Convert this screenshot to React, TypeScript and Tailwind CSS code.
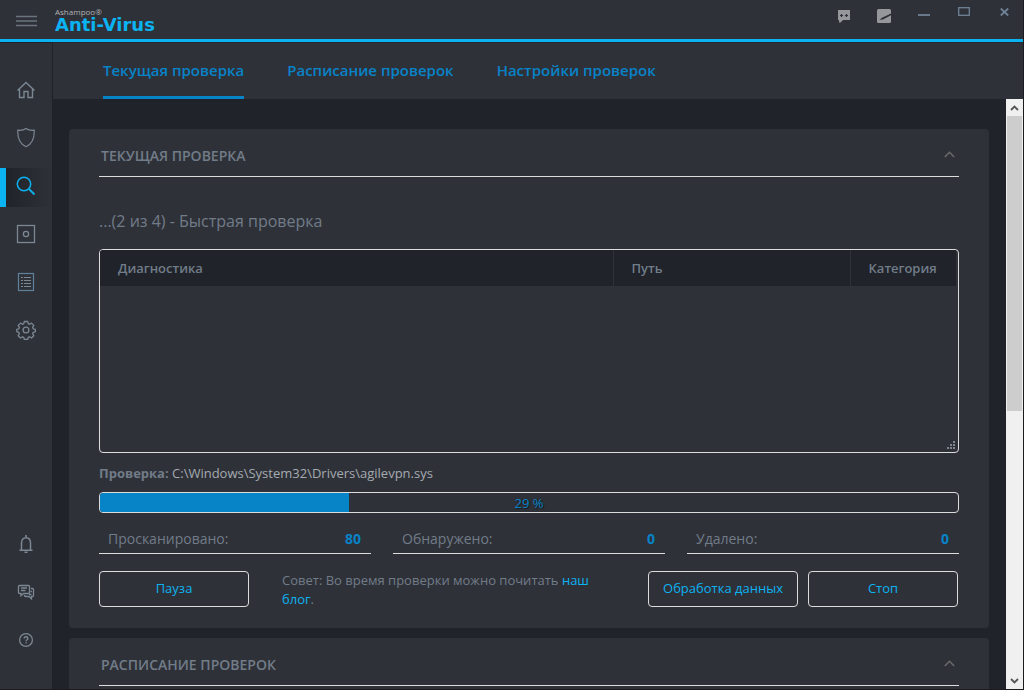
// src/App.tsx
import type { ReactNode } from "react";

interface NavItem {
  label:   string;
  icon:    ReactNode;
  active?: boolean;
}

const MAIN_NAV: NavItem[] = [
  {
    label: "Главная",
    icon: <path d="M1.500 10.500 10 2.500l8.500 8M3.500 9v8.500h4.500v-6h4v6h4.500V9" strokeWidth="1.400" />,
  },
  {
    label: "Защита",
    icon: <path d="M10 .5C8 2 5 2.500 1.800 2.200 1.500 9 3 15.500 10 18.700c7-3.200 8.500-9.700 8.200-16.500C15 2.500 12 2 10 .5z" />,
  },
  {
    label: "Проверка",
    active: true,
    icon: (
      <>
        <circle cx="8" cy="8" r="6.700" strokeWidth="1.500" />
        <path d="m13 13 5.500 5.500" strokeWidth="1.800" />
      </>
    ),
  },
  {
    label: "Карантин",
    icon: (
      <>
        <rect x="1.500" y="1.500" width="17" height="17" strokeWidth="1.300" />
        <circle cx="10" cy="10" r="2.600" strokeWidth="1.300" />
      </>
    ),
  },
  {
    label: "Отчёты",
    icon: (
      <>
        <rect x="2.500" y="1.500" width="15" height="17" stroke="#5f809c" />
        <path d="M5 5.500h2M8 5.500h7M5 8.500h2M8 8.500h7M5 11.500h2M8 11.500h7M5 14.500h2M8 14.500h7" />
      </>
    ),
  },
  {
    label: "Настройки",
    icon: (
      <>
        <path d="M8.300 1.500h3.400l.5 2.200 1.300.6 2-1.200 2.300 2.300-1.200 2 .6 1.400 2.200.5v2.400l-2.200.6-.6 1.400 1.200 2-2.300 2.300-2-1.200-1.300.6-.5 2.100H8.300l-.5-2.100-1.300-.6-2 1.200-2.300-2.300 1.200-2-.6-1.400-2-.6V9.300l2-.5.6-1.400-1.200-2 2.300-2.300 2 1.200 1.300-.6z" strokeWidth="1.300" strokeLinejoin="round" />
        <circle cx="10" cy="10" r="2.900" strokeWidth="1.300" />
      </>
    ),
  },
];

const FOOTER_NAV: NavItem[] = [
  {
    label: "Уведомления",
    icon: (
      <>
        <path d="M3.500 16.300h13M5.500 16V9c0-3.300 1.600-5.300 4.500-5.300s4.500 2 4.500 5.300v7" strokeWidth="1.500" />
        <path d="M10 1v2.500M8.500 18.300h3" strokeWidth="1.600" />
      </>
    ),
  },
  {
    label: "Сообщения",
    icon: (
      <>
        <path d="M3.500 3.500h9c.6 0 1 .4 1 1v6c0 .6-.4 1-1 1H7.500L5 13.700v-2.200H3.500c-.6 0-1-.4-1-1v-6c0-.6.4-1 1-1zM5 6h6M5 8.500h4.500" strokeWidth="1.300" />
        <path d="M15 6.500h1.500c.6 0 1 .4 1 1v6c0 .6-.4 1-1 1h-1v2.200l-2.500-2.200H9.500c-.6 0-1-.4-1-1V13M13 12.500h2.500M14.500 9.500h1.500" strokeWidth="1.300" />
      </>
    ),
  },
  {
    label: "Справка",
    icon: (
      <>
        <circle cx="10" cy="10" r="6.400" strokeWidth="1.300" />
        <path d="M8.200 8.600c0-1.200.8-1.800 1.900-1.800s1.800.6 1.800 1.600c0 1.300-1.800 1.300-1.800 2.800M10.100 12.300v1.300" strokeWidth="1.400" />
      </>
    ),
  },
];

const TABS = ["Текущая проверка", "Расписание проверок", "Настройки проверок"];

const STATS = [
  { label: "Просканировано:", value: 80 },
  { label: "Обнаружено:",     value: 0  },
  { label: "Удалено:",        value: 0  },
];

const PROGRESS = 29;

export default function App() {
  return (
    <div className="flex h-screen flex-col overflow-hidden border-r border-b border-[#1b1b20] bg-[#20232a] font-['Open_Sans','Noto_Sans',sans-serif] text-[#717c89]">
      <TitleBar />
      <div className="flex min-h-0 flex-1">
        <Sidebar />
        <div className="flex min-w-0 flex-1 flex-col">
          <Tabs />
          <div className="flex min-h-0 flex-1">
            <main className="min-w-0 flex-1 space-y-2.5 overflow-hidden py-[30px] pr-[17px] pl-4">
              <Card title="Текущая проверка">
                <ScanPanel />
              </Card>
              <Card title="Расписание проверок">
                <div className="h-40" />
              </Card>
            </main>
            <ScrollBar />
          </div>
        </div>
      </div>
    </div>
  );
}

function TitleBar() {
  return (
    <header className="flex h-[42px] shrink-0 items-start border-b-3 border-[#0bb3f2] bg-[#2f3138]">
      <button aria-label="Меню" className="mt-[15px] ml-4 text-[#6b747e]">
        <svg width="21" height="12" viewBox="0 0 21 12" stroke="currentColor" strokeWidth="1.300">
          <path d="M0 1.500h21M0 6h21M0 10.500h21" />
        </svg>
      </button>
      <div className="mt-[7px] ml-[18px]">
        <p className="text-[8px] leading-[10px] text-[#b0b2b6]">Ashampoo®</p>
        <h1 className="font-['DejaVu_Sans',sans-serif] text-[18px] leading-[15px] font-bold text-[#0bb3f2]">Anti-Virus</h1>
      </div>
      <div className="mr-3 ml-auto flex items-start text-[#6f8296]">
        <button aria-label="Отзыв" className="mr-[26px] pt-[10px] text-[#95979b]">
          <svg width="13" height="13" viewBox="0 0 13 13" fill="currentColor">
            <path d="M0 0h12v10H5l-2.500 2.500H1V10H0z" />
            <path d="M3.500 4v3M2 5.500h3M8.500 4v3M7 5.500h3" stroke="#2f3138" strokeWidth="1.200" />
          </svg>
        </button>
        <button aria-label="Оформление" className="mr-[27px] pt-[9px] text-[#95979b]">
          <svg width="14" height="14" viewBox="0 0 14 14">
            <rect width="14" height="14" rx="1.500" fill="currentColor" />
            <path d="m2.500 10.800 2.500-2 9-4.300v1.800L6 10.500z" fill="#2f3138" />
          </svg>
        </button>
        <button aria-label="Свернуть" className="mr-7 pt-[14px]">
          <svg width="12" height="2" viewBox="0 0 12 2"><path d="M0 1h12" stroke="currentColor" strokeWidth="1.800" /></svg>
        </button>
        <button aria-label="Развернуть" className="mr-[30px] pt-[7px]">
          <svg width="12" height="9" viewBox="0 0 12 9">
            <rect x=".7" y=".7" width="10.600" height="7.600" fill="none" stroke="currentColor" strokeWidth="1.300" />
          </svg>
        </button>
        <button aria-label="Закрыть" className="mr-0.5 pt-2">
          <svg width="9" height="8" viewBox="0 0 9 8"><path d="m.8.500 7.400 7M8.200.5l-7.400 7" stroke="currentColor" strokeWidth="1.800" /></svg>
        </button>
      </div>
    </header>
  );
}

function Sidebar() {
  return (
    <nav className="flex w-[53px] shrink-0 flex-col justify-between border-t border-r border-[#1f2227] bg-[#2f3138] pt-[29px] pb-7">
      <NavList items={MAIN_NAV} />
      <NavList items={FOOTER_NAV} />
    </nav>
  );
}

function NavList({ items }: { items: NavItem[] }) {
  return (
    <ul className="space-y-[9px]">
      {items.map(item => (
        <li key={item.label}>
          <button
            aria-label={item.label}
            className={`flex h-[39px] w-full items-start border-l-6 pt-2 pl-[10px]
              ${item.active ? "border-[#0bb3f2] bg-linear-to-r from-[#20232a] to-[#2f3138] text-[#0bb3f2]" : "border-transparent text-[#7b8793]"}`}
          >
            <svg width="20" height="20" viewBox="0 0 20 20" fill="none" stroke="currentColor" strokeWidth="1.200">
              {item.icon}
            </svg>
          </button>
        </li>
      ))}
    </ul>
  );
}

function Tabs() {
  return (
    <div className="flex h-[57px] shrink-0 items-stretch gap-[43px] border-t border-[#25282e] bg-[#2f3138] pl-[50px]" role="tablist">
      {TABS.map((tab, i) => (
        <button
          key={tab}
          role="tab"
          aria-selected={i === 0}
          className={`border-b-3 pt-0.5 text-[15px] font-semibold text-[#0783c8] ${i === 0 ? "border-[#0783c8]" : "border-transparent"}`}
        >
          {tab}
        </button>
      ))}
    </div>
  );
}

function Card({ title, children }: { title: string; children: ReactNode }) {
  return (
    <section className="rounded bg-[#2f3138] px-[30px]">
      <div className="flex h-12 items-center justify-between border-b border-[#dcdcdc] pt-1.5 pr-1 pl-0.5">
        <h2 className="text-[14px] font-semibold uppercase">{title}</h2>
        <button aria-label="Свернуть раздел" className="pb-0.5 text-[#696969]">
          <svg width="11" height="7" viewBox="0 0 11 7" fill="none" stroke="currentColor" strokeWidth="1.600">
            <path d="m.8 6 4.700-4.700L10.200 6" />
          </svg>
        </button>
      </div>
      {children}
    </section>
  );
}

function ScanPanel() {
  return (
    <div className="pb-[19px]">
      <p className="pt-8 pb-4 text-[16px] leading-6">...(2 из 4) - Быстрая проверка</p>

      {/* Results */}
      <div className="flex h-[204px] flex-col justify-between overflow-hidden rounded border border-[#dcdcdc] pr-0.5">
        <table className="w-full table-fixed text-left text-[13px]">
          <thead className="bg-[#20232a]">
            <tr className="h-9">
              <th className="border-r border-[#2f3138] pt-0.5 pl-[18px] font-semibold">Диагностика</th>
              <th className="w-[237px] border-r border-[#2f3138] pt-0.5 pl-[18px] font-semibold">Путь</th>
              <th className="w-[106px] pt-0.5 pl-[18px] font-semibold">Категория</th>
            </tr>
          </thead>
          <tbody />
        </table>
        <svg className="mb-[3px] self-end" width="9" height="8" viewBox="0 0 9 8" fill="#80868d">
          <path d="M6 0h2v2H6zM3 3h2v2H3zM6 3h2v2H6zM0 6h2v2H0zM3 6h2v2H3zM6 6h2v2H6z" />
        </svg>
      </div>

      <p className="pt-[10px] pb-[9px] text-[13px] leading-5 text-[#a5abb1]">
        <b className="font-bold text-[#717c89]">Проверка:</b> C:\Windows\System32\Drivers\agilevpn.sys
      </p>

      <div
        role="progressbar"
        aria-valuenow={PROGRESS}
        aria-label="Ход проверки"
        className="relative h-[21px] overflow-hidden rounded border border-[#dcdcdc]"
      >
        <div className="h-full bg-[#0783c8]" style={{ width: `${PROGRESS}%` }} />
        <span className="absolute inset-0 text-center text-[13px] leading-5 text-[#0783c8] text-shadow-[1px_1px_1px_#17191e]">
          {PROGRESS} %
        </span>
      </div>

      {/* Counters */}
      <dl className="grid grid-cols-3 gap-[22px] pt-[14px]">
        {STATS.map(s => (
          <div key={s.label} className="flex justify-between border-b border-[#dcdcdc] pr-[10px] pb-0.5 pl-[9px] text-[14px] leading-6">
            <dt>{s.label}</dt>
            <dd className="font-bold text-[#0783c8]">{s.value}</dd>
          </div>
        ))}
      </dl>

      <div className="flex items-start pt-[17px] pr-px">
        <ActionButton>Пауза</ActionButton>
        <p className="mx-[33px] min-w-0 flex-1 text-[13px] leading-[19px]">
          Совет: Во время проверки можно почитать <a href="#blog" className="text-[#0bb3f2]">наш блог</a>.
        </p>
        <div className="flex gap-2.5">
          <ActionButton>Обработка данных</ActionButton>
          <ActionButton>Стоп</ActionButton>
        </div>
      </div>
    </div>
  );
}

function ActionButton({ children }: { children: ReactNode }) {
  return (
    <button className="h-9 w-[150px] shrink-0 rounded border border-[#dcdcdc] text-[13px] text-[#0bb3f2]">
      {children}
    </button>
  );
}

function ScrollBar() {
  return (
    <div className="flex w-[17px] shrink-0 flex-col bg-[#f0f0f0] px-px text-[#555]">
      <button aria-label="Вверх" className="flex h-[17px] shrink-0 items-center justify-center">
        <svg width="9" height="6" viewBox="0 0 9 6" fill="none" stroke="currentColor" strokeWidth="1.800"><path d="m1 5 3.500-3.500L8 5" /></svg>
      </button>
      <div className="min-h-0 flex-1">
        <div className="h-[53%] bg-[#cdcdcd]" />
      </div>
      <button aria-label="Вниз" className="flex h-[17px] shrink-0 items-center justify-center">
        <svg width="9" height="6" viewBox="0 0 9 6" fill="none" stroke="currentColor" strokeWidth="1.800"><path d="m1 1 3.500 3.500L8 1" /></svg>
      </button>
    </div>
  );
}
